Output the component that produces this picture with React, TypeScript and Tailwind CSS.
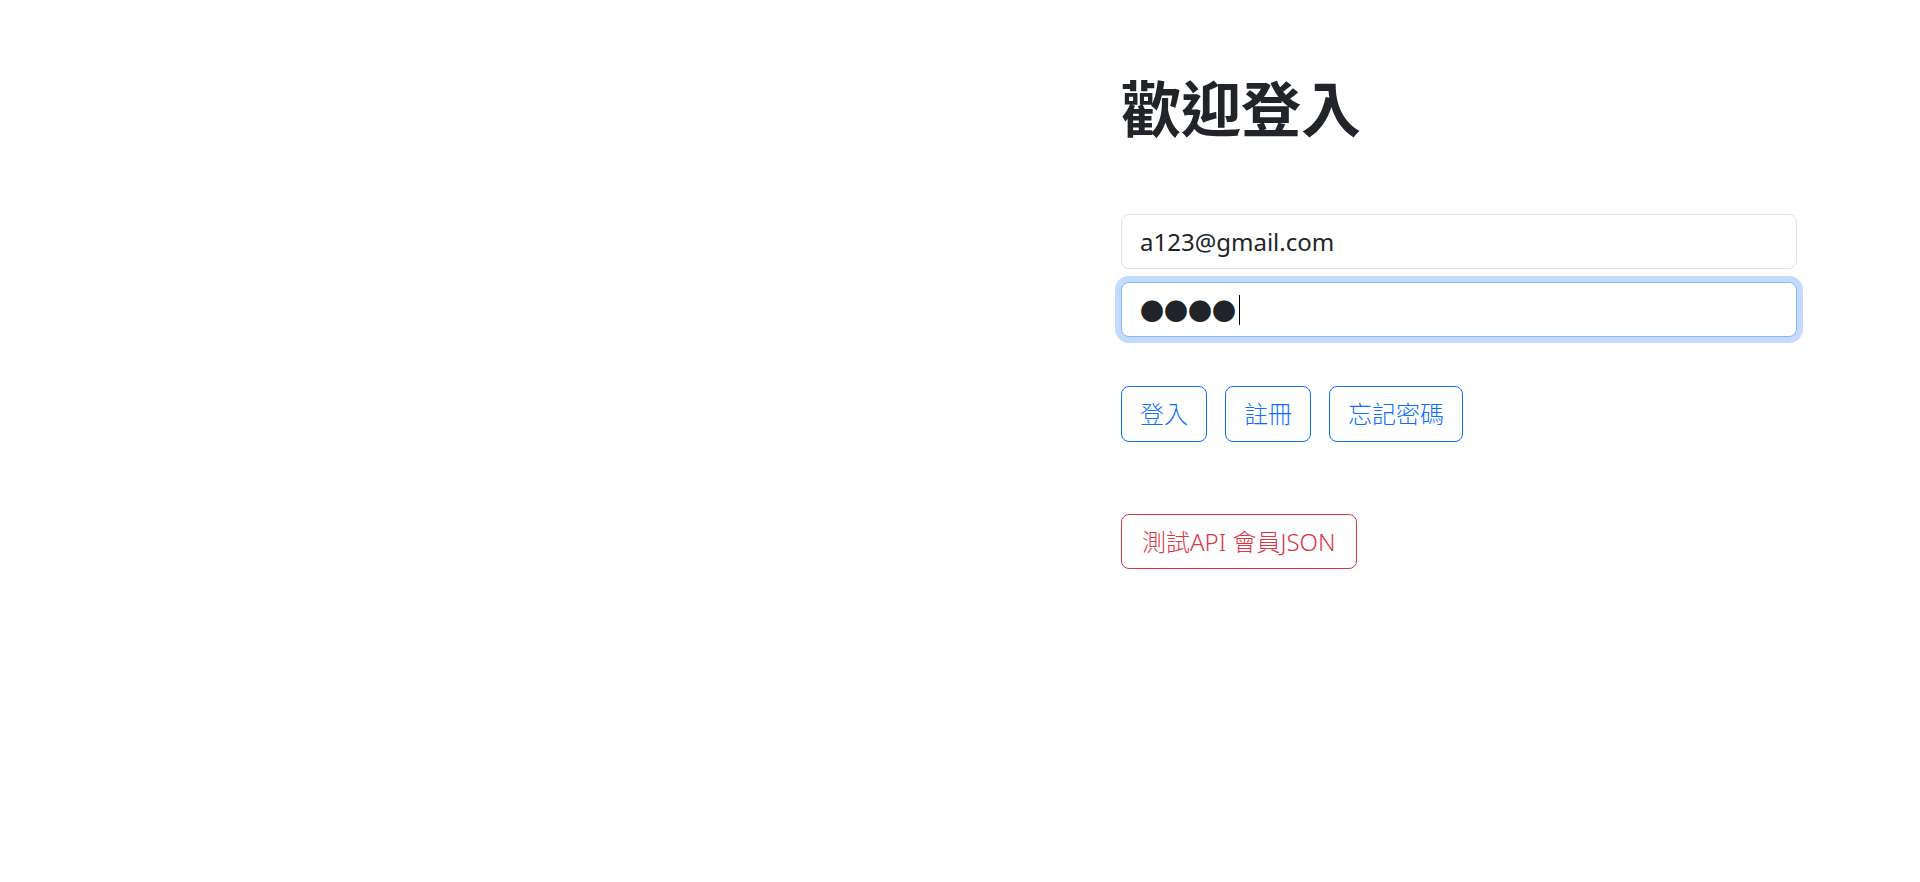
import { useState } from 'react';

export default function App() {
  const [email, setEmail] = useState('a123@gmail.com');

  return (
    <div className="flex min-h-screen bg-white font-['Noto_Sans','Noto_Sans_CJK_TC',sans-serif] text-[#212529]">
      {/* 左側空白 */}
      <div className="w-[1121px] shrink-0" />

      {/* 登入表單 */}
      <main className="w-[676px] pt-[70px]">
        <h1 className="h-[72px] text-[60px] font-semibold leading-[72px] font-['Noto_Sans_CJK_TC',sans-serif]">
          歡迎登入
        </h1>

        <div className="mt-[72px] flex flex-col gap-[13px]">
          <input
            type="email"
            value={email}
            onChange={(e) => setEmail(e.target.value)}
            className="h-[55px] w-full rounded-[8px] border border-[#dee2e6] bg-white px-[18px] text-[24px] text-[#212529] outline-none"
          />
          <div className="flex h-[55px] w-full items-center rounded-[8px] border border-[#86b7fe] bg-white px-[18px] shadow-[0_0_0_6px_rgba(13,110,253,0.25)]">
            <span className="text-[24px] leading-none text-[#212529] font-['Noto_Sans_CJK_TC',sans-serif]">●●●●</span>
            <span className="ml-[3px] h-[30px] w-px bg-black" />
          </div>
        </div>

        <div className="mt-[49px] flex gap-[18px]">
          <button className="h-[56px] rounded-[8px] border border-[#0d6efd] px-[18px] text-[24px] font-light text-[#0d6efd]">
            登入
          </button>
          <button className="h-[56px] rounded-[8px] border border-[#0d6efd] px-[18px] text-[24px] font-light text-[#0d6efd]">
            註冊
          </button>
          <button className="h-[56px] rounded-[8px] border border-[#0d6efd] px-[18px] text-[24px] font-light text-[#0d6efd]">
            忘記密碼
          </button>
        </div>

        <div className="mt-[72px]">
          <button className="h-[55px] rounded-[8px] border border-[#dc3545] px-[20px] text-[24px] font-light text-[#dc3545]">
            測試API 會員JSON
          </button>
        </div>
      </main>
    </div>
  );
}
